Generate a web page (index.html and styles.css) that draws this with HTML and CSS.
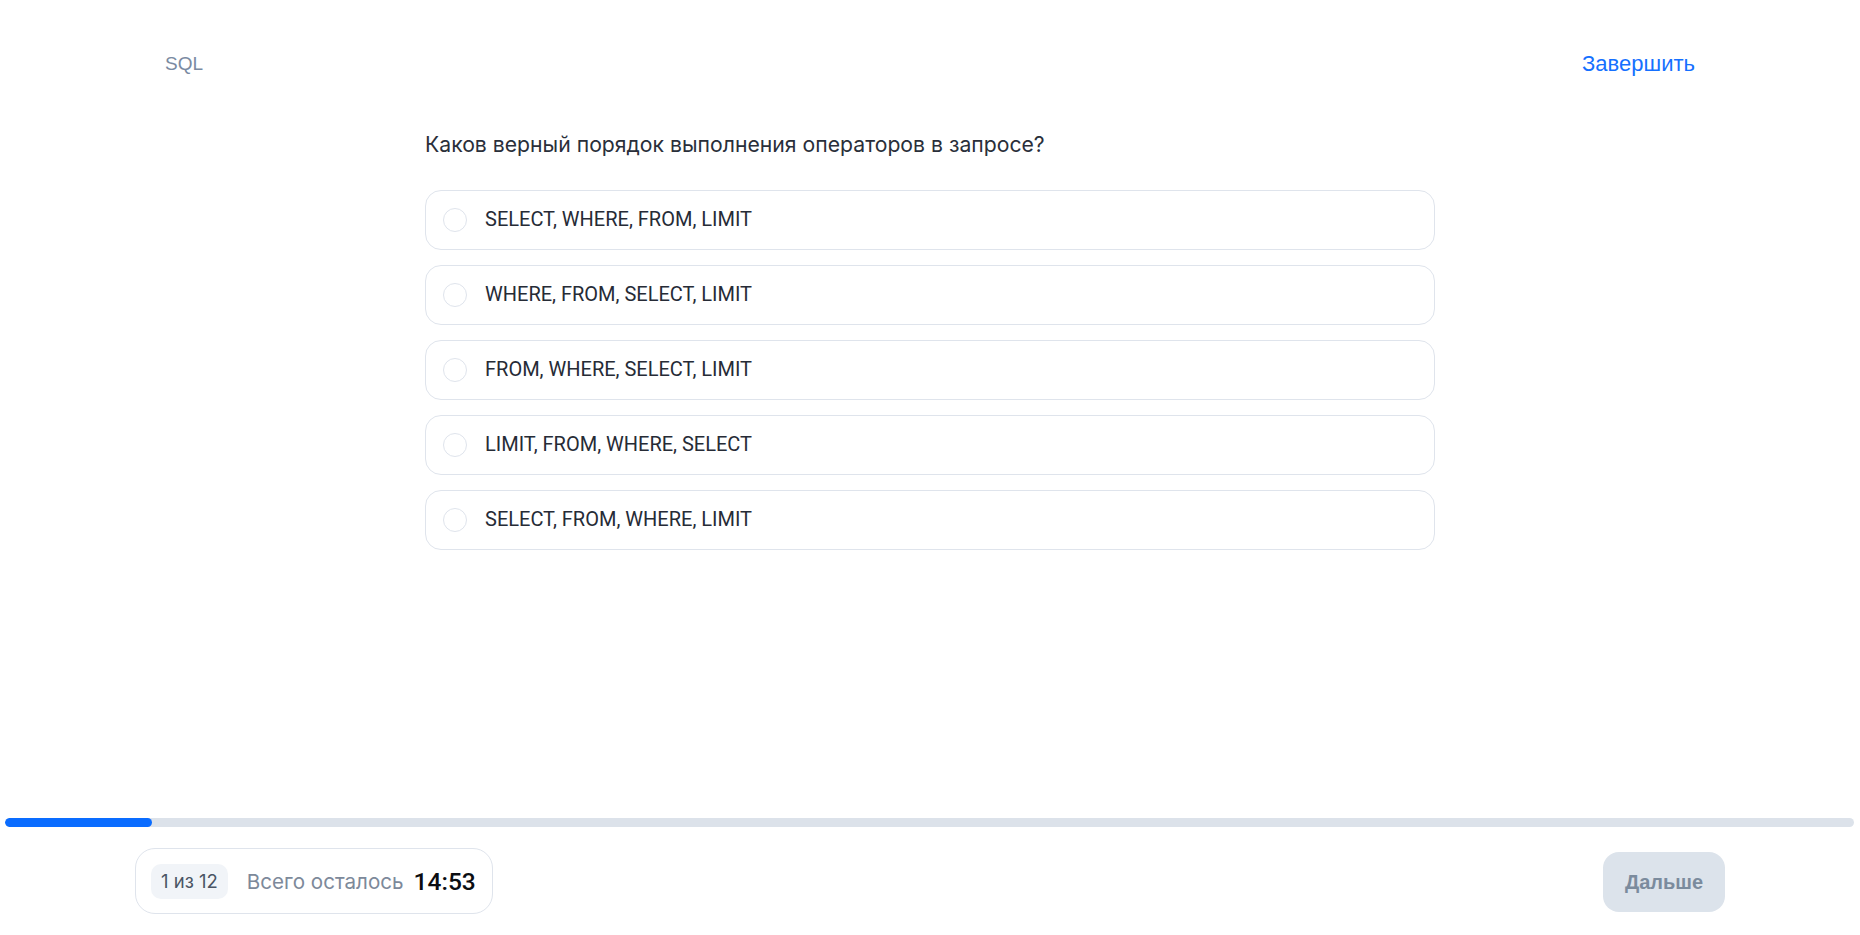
FILE: index.html
```html
<!DOCTYPE html>
<html lang="ru">
<head>
<meta charset="utf-8">
<title>SQL тест</title>
<link rel="stylesheet" href="styles.css">
</head>
<body>
<div class="page">
  <header class="topbar">
    <span class="topic">SQL</span>
    <a class="finish" href="#">Завершить</a>
  </header>
  <main class="quiz">
    <h1 class="question">Каков верный порядок выполнения операторов в запросе?</h1>
    <div class="options">
      <label class="option"><span class="radio"></span><span class="option-text">SELECT, WHERE, FROM, LIMIT</span></label>
      <label class="option"><span class="radio"></span><span class="option-text">WHERE, FROM, SELECT, LIMIT</span></label>
      <label class="option"><span class="radio"></span><span class="option-text">FROM, WHERE, SELECT, LIMIT</span></label>
      <label class="option"><span class="radio"></span><span class="option-text">LIMIT, FROM, WHERE, SELECT</span></label>
      <label class="option"><span class="radio"></span><span class="option-text">SELECT, FROM, WHERE, LIMIT</span></label>
    </div>
  </main>
  <footer class="bottom">
    <div class="progress"><div class="progress-fill" style="width: 147px"></div></div>
    <div class="bottom-row">
      <div class="status">
        <span class="counter">1 из 12</span>
        <span class="remain-label">Всего осталось</span>
        <span class="timer">14:53</span>
      </div>
      <button class="next" type="button">Дальше</button>
    </div>
  </footer>
</div>
</body>
</html>
```

FILE: styles.css
```css
* { box-sizing: border-box; }
html, body { margin: 0; padding: 0; background: #fff; }
body { font-family: "Roboto", "Liberation Sans", sans-serif; color: #262b36; }

.page {
  height: 100vh;
  display: flex;
  flex-direction: column;
}

.topbar {
  display: flex;
  justify-content: space-between;
  align-items: center;
  padding: 50px 165px 0 165px;
  height: 78px;
}
.topic {
  font-family: "Liberation Sans", Arial, sans-serif;
  font-size: 19px;
  line-height: 28px;
  color: #7a8aa2;
}
.finish {
  font-family: "Liberation Sans", Arial, sans-serif;
  font-size: 22px;
  line-height: 28px;
  color: #1570ff;
  text-decoration: none;
}

.quiz {
  flex: 1;
  width: 1010px;
  margin-left: 425px;
  padding-top: 52px;
}
.question {
  margin: 0 0 32px;
  font-family: "Inter", sans-serif;
  font-weight: 400;
  font-size: 21.2px;
  line-height: 28px;
  color: #2a2f3a;
}
.options {
  display: flex;
  flex-direction: column;
  gap: 15px;
}
.option {
  display: flex;
  align-items: center;
  gap: 18px;
  height: 60px;
  padding-left: 17px;
  border: 1px solid #dfe4ec;
  border-radius: 16px;
  cursor: pointer;
}
.radio {
  width: 24px;
  height: 24px;
  border: 1px solid #dfe4ec;
  border-radius: 50%;
  flex: none;
}
.option-text {
  font-size: 20px;
  line-height: 24px;
  padding-bottom: 2px;
  color: #262b36;
}

.bottom {
  display: flex;
  flex-direction: column;
}
.progress {
  height: 9px;
  margin: 0 6px 21px 5px;
  background: #dce2ea;
  border-radius: 5px;
  overflow: hidden;
}
.progress-fill {
  height: 100%;
  background: #0a6cff;
  border-radius: 5px;
}
.bottom-row {
  display: flex;
  justify-content: space-between;
  align-items: center;
  padding: 0 135px 21px;
}
.status {
  display: flex;
  align-items: center;
  height: 66px;
  padding: 0 16px 0 15px;
  border: 1px solid #dfe4ec;
  border-radius: 20px;
  font-family: "Inter", sans-serif;
}
.counter {
  height: 35px;
  line-height: 35px;
  padding: 0 10px;
  background: #f1f4f8;
  border-radius: 10px;
  font-size: 18.5px;
  color: #4a5464;
}
.remain-label {
  margin-left: 19px;
  font-size: 20.6px;
  color: #7d899a;
}
.timer {
  margin-left: 10px;
  font-family: "Roboto", sans-serif;
  font-size: 24.5px;
  font-weight: 500;
  color: #0b0d12;
}
.next {
  width: 122px;
  height: 60px;
  margin-top: 2px;
  border: none;
  border-radius: 16px;
  background: #dce3eb;
  font-family: "Liberation Sans", Arial, sans-serif;
  font-weight: 700;
  font-size: 20px;
  color: #7b8b9d;
  cursor: pointer;
}
```
